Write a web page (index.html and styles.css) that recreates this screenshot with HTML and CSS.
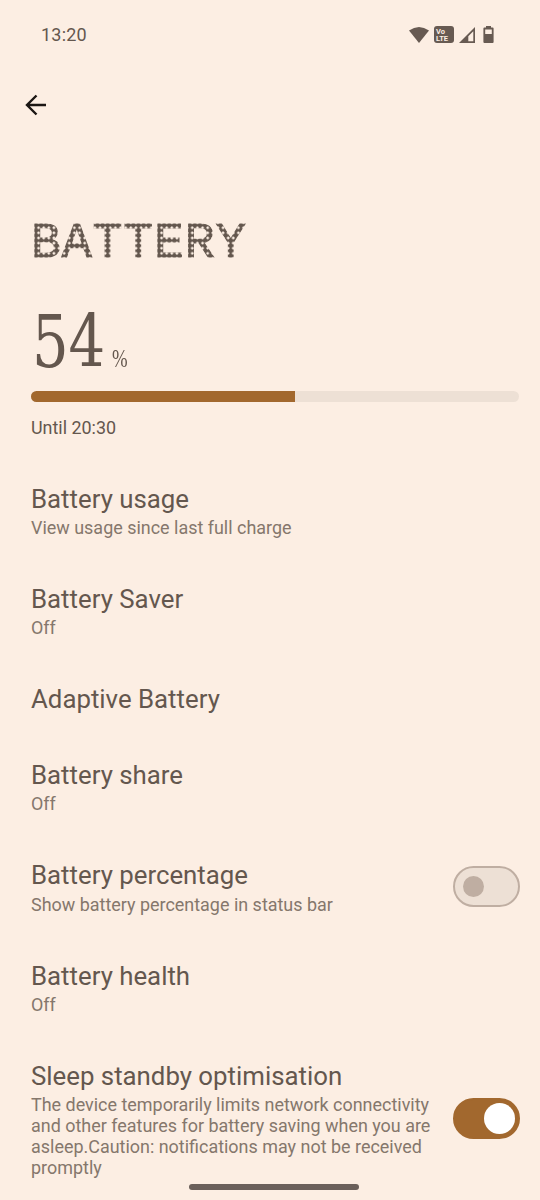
FILE: index.html
```html
<!DOCTYPE html>
<html lang="en">
<head>
    <meta charset="UTF-8">
    <meta name="viewport" content="width=device-width, initial-scale=1.0">
    <title>Battery</title>
    <link rel="stylesheet" href="styles.css">
</head>
<body>
    <div class="status-bar">
        <span class="clock">13:20</span>
        <svg class="icon-wifi" width="20" height="16" viewBox="0 0 20 16"><path d="M0 3.6Q10-3.400 20 3.600L10 16z"/></svg>
        <div class="volte"><span>Vo</span><span>LTE</span></div>
        <svg class="icon-signal" width="16" height="16" viewBox="0 0 16 16"><path fill-rule="evenodd" d="M16 0V16H0zM14.300 4.200L9.300 9.200V14.200H14.300z"/></svg>
        <svg class="icon-battery" width="11" height="17" viewBox="0 0 11 17"><path fill-rule="evenodd" d="M3 0h5v1.600h1.600q1 0 1 1V16q0 1-1 1H1.400q-1 0-1-1V2.600q0-1 1-1H3zM2.200 3.400v4.600h6.600V3.400z"/></svg>
    </div>
    <div class="toolbar">
        <svg width="22" height="22" viewBox="0 0 22 22"><path d="M21 11H2M11.500 1.500L2 11l9.500 9.500"/></svg>
    </div>
    <h1 class="page-title">BATTERY</h1>
    <div class="level">
        <div class="amount"><span class="number">54</span><span class="percent">%</span></div>
        <div class="bar"><div class="bar-fill"></div></div>
        <p class="until">Until 20:30</p>
    </div>
    <ul class="list">
        <li><div class="text"><h2>Battery usage</h2><p>View usage since last full charge</p></div></li>
        <li><div class="text"><h2>Battery Saver</h2><p>Off</p></div></li>
        <li><div class="text"><h2>Adaptive Battery</h2></div></li>
        <li><div class="text"><h2>Battery share</h2><p>Off</p></div></li>
        <li><div class="text"><h2>Battery percentage</h2><p>Show battery percentage in status bar</p></div><div class="switch"></div></li>
        <li><div class="text"><h2>Battery health</h2><p>Off</p></div></li>
        <li><div class="text"><h2>Sleep standby optimisation</h2><p>The device temporarily limits network connectivity and other features for battery saving when you are asleep.Caution: notifications may not be received promptly</p></div><div class="switch on"></div></li>
    </ul>
    <div class="home-bar"></div>
</body>
</html>
```
FILE: styles.css
```css
*{
    margin: 0;
    padding: 0;
    box-sizing: border-box;
}
body{
    width: 540px;
    height: 1200px;
    overflow: hidden;
    background: #fceee3;
    color: #64574e;
    font-family: Roboto, sans-serif;
}
ul{
    list-style: none;
}
/* status bar */
.status-bar{
    display: flex;
    align-items: center;
    height: 69px;
    padding: 0 46px 0 41px;
}
.status-bar svg{
    fill: #675a52;
}
.clock{
    margin-right: auto;
    font-size: 18px;
    letter-spacing: 0.2px;
}
.volte{
    display: flex;
    flex-direction: column;
    justify-content: center;
    width: 20px;
    height: 17px;
    margin: 0 5px;
    padding-left: 2px;
    border-radius: 3px;
    background: #675a52;
    color: #fceee3;
    font-size: 7.5px;
    font-weight: 700;
    line-height: 7px;
}
.icon-battery{
    margin-left: 8px;
}
.toolbar{
    display: flex;
    align-items: center;
    height: 72px;
    padding-left: 25px;
}
.toolbar svg{
    fill: none;
    stroke: #1b1613;
    stroke-width: 2.4;
}
/* dot matrix heading */
.page-title{
    width: 240px;
    height: 46px;
    margin: 78px 0 0 31px;
    padding-top: 4px;
    font-family: "Liberation Mono", monospace;
    font-size: 50px;
    font-weight: 400;
    line-height: 42px;
    letter-spacing: 0.77px;
    color: transparent;
    -webkit-text-stroke: 1.2px transparent;
    background: radial-gradient(circle, #64574e 2.3px, transparent 2.7px) 2.43px 3.6px / 5.13px 5.13px;
    -webkit-background-clip: text;
    background-clip: text;
}
.level{
    padding: 42px 21px 0 31px;
}
.amount{
    display: flex;
    align-items: baseline;
    height: 84px;
    line-height: 70px;
}
.number{
    width: 81px;
    padding-left: 1px;
    font-family: "DejaVu Serif Condensed", "DejaVu Serif", serif;
    font-size: 72px;
    font-stretch: condensed;
    transform: scaleX(0.89);
    transform-origin: left;
}
.percent{
    font-family: "Liberation Serif", serif;
    font-size: 25px;
    transform: scaleX(0.75);
    transform-origin: left;
}
.bar{
    height: 11px;
    border-radius: 6px;
    background: #ede0d5;
    overflow: hidden;
}
.bar-fill{
    width: 54%;
    height: 100%;
    background: #a2682e;
}
.until{
    margin-top: 15px;
    font-size: 17.9px;
    line-height: 22px;
}
/* settings rows */
.list li{
    display: flex;
    align-items: center;
    padding: 23px 20.5px 23px 31px;
}
.list{
    margin-top: 21.7px;
}
.text{
    flex: 1;
}
.list h2{
    font-size: 25.8px;
    font-weight: 400;
    line-height: 30px;
}
.list p{
    width: 404px;
    margin-top: 3.25px;
    color: #85776c;
    font-size: 17.95px;
    line-height: 21px;
}
.switch{
    width: 67px;
    height: 41px;
    margin-bottom: 2px;
    padding: 8px;
    border: 2.5px solid #bfaea2;
    border-radius: 21px;
    background: #ede0d5;
}
.switch::before{
    content: "";
    display: block;
    width: 21px;
    height: 21px;
    border-radius: 50%;
    background: #bfaea2;
}
.switch.on{
    padding: 3px 3px 3px 29px;
    border-color: #a2682e;
    background: #a2682e;
}
.switch.on::before{
    width: 31px;
    height: 31px;
    background: #fff;
}
.home-bar{
    position: absolute;
    left: 189px;
    top: 1184px;
    width: 170px;
    height: 6px;
    border-radius: 3px;
    background: #6b605b;
}
```
